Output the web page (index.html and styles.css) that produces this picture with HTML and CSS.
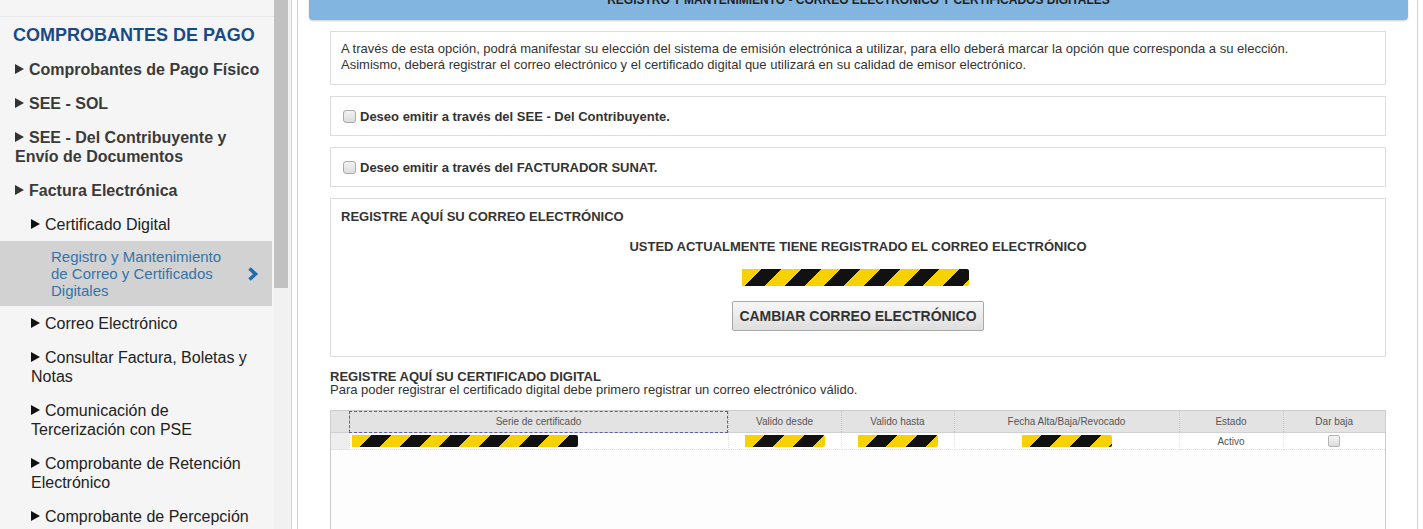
FILE: index.html
```html
<!DOCTYPE html>
<html lang="es">
<head>
  <meta charset="UTF-8" />
  <title>SUNAT - Registro y Mantenimiento de Correo y Certificados Digitales</title>
  <link rel="stylesheet" href="styles.css">
</head>
<body>

  <div class="layout">
    <aside class="sidebar">
      <div class="menu">
        <h3 class="menu-title">COMPROBANTES DE PAGO</h3>
        <div class="item main-item"><span class="arrow"></span>Comprobantes de Pago Físico</div>
        <div class="item main-item"><span class="arrow"></span>SEE - SOL</div>
        <div class="item main-item"><span class="arrow"></span>SEE - Del Contribuyente y Envío de Documentos</div>
        <div class="item main-item"><span class="arrow"></span>Factura Electrónica</div>
        <div class="item sub-item"><span class="arrow"></span>Certificado Digital</div>
        <div class="item active-item">
          <span>Registro y Mantenimiento de Correo y Certificados Digitales</span>
          <svg class="chevron" width="12" height="16" viewBox="0 0 12 16">
            <polyline points="2.5,2.5 8.5,8 2.5,13.5" fill="none" stroke="#1f6db3" stroke-width="3.6" />
          </svg>
        </div>
        <div class="item sub-item"><span class="arrow"></span>Correo Electrónico</div>
        <div class="item sub-item"><span class="arrow"></span>Consultar Factura, Boletas y Notas</div>
        <div class="item sub-item"><span class="arrow"></span>Comunicación de Tercerización con PSE</div>
        <div class="item sub-item"><span class="arrow"></span>Comprobante de Retención Electrónico</div>
        <div class="item sub-item"><span class="arrow"></span>Comprobante de Percepción Electrónico</div>
      </div>
    </aside>

    <div class="scrollbar"><div class="thumb"></div></div>

    <main class="content">
      <div class="page-title">
        <span>REGISTRO Y MANTENIMIENTO - CORREO ELECTRÓNICO Y CERTIFICADOS DIGITALES</span>
      </div>

      <div class="panel intro">
        A través de esta opción, podrá manifestar su elección del sistema de emisión electrónica a utilizar, para ello deberá marcar la opción que corresponda a su elección.<br>
        Asimismo, deberá registrar el correo electrónico y el certificado digital que utilizará en su calidad de emisor electrónico.
      </div>

      <div class="panel option">
        <label><input type="checkbox"> Deseo emitir a través del SEE - Del Contribuyente.</label>
      </div>

      <div class="panel option">
        <label><input type="checkbox"> Deseo emitir a través del FACTURADOR SUNAT.</label>
      </div>

      <div class="panel email">
        <div class="section-title">REGISTRE AQUÍ SU CORREO ELECTRÓNICO</div>
        <div class="email-current">USTED ACTUALMENTE TIENE REGISTRADO EL CORREO ELECTRÓNICO</div>
        <div class="redacted email-value"></div>
        <button class="btn">CAMBIAR CORREO ELECTRÓNICO</button>
      </div>

      <div class="cert-head">
        <div class="section-title">REGISTRE AQUÍ SU CERTIFICADO DIGITAL</div>
        <div>Para poder registrar el certificado digital debe primero registrar un correo electrónico válido.</div>
      </div>

      <div class="grid">
        <table>
          <colgroup>
            <col style="width:18px">
            <col style="width:379px">
            <col style="width:113px">
            <col style="width:113px">
            <col style="width:225px">
            <col style="width:104px">
            <col>
          </colgroup>
          <thead>
            <tr>
              <th class="row-head"></th>
              <th class="focused">Serie de certificado</th>
              <th>Valido desde</th>
              <th>Valido hasta</th>
              <th>Fecha Alta/Baja/Revocado</th>
              <th>Estado</th>
              <th>Dar baja</th>
            </tr>
          </thead>
          <tbody>
            <tr>
              <td class="row-head"></td>
              <td class="left"><div class="redacted serie"></div></td>
              <td><div class="redacted date"></div></td>
              <td><div class="redacted date"></div></td>
              <td><div class="redacted fecha"></div></td>
              <td>Activo</td>
              <td><span class="mini-check"></span></td>
            </tr>
          </tbody>
        </table>
      </div>
    </main>
  </div>

</body>
</html>
```

FILE: styles.css
```css
body {
  margin: 0;
  font-family: "Liberation Sans", Arial, sans-serif;
  font-size: 13px;
  color: #333;
  background: #fff;
  overflow: hidden;
}

.layout {
  display: flex;
  height: 529px;
}

/* menu lateral */
.sidebar {
  width: 274px;
  flex-shrink: 0;
  background-color: #f5f5f5;
  padding-top: 16px;
}

.menu {
  border-top: 1px solid #e9e9e9;
  padding-top: 7px;
}

.menu-title {
  margin: 0 0 6px;
  padding: 0 13px;
  font-size: 18px;
  line-height: 22px;
  color: #174b87;
}

.item {
  padding: 7.5px 13px;
  line-height: 19px;
  font-size: 16px;
}

.main-item {
  font-weight: bold;
  color: #3a3a3a;
  padding-left: 15px;
}

.sub-item {
  color: #222;
  padding-left: 31px;
}

.arrow {
  display: inline-block;
  width: 0;
  height: 0;
  border-left: 9px solid #333;
  border-top: 5px solid transparent;
  border-bottom: 5px solid transparent;
  margin-right: 5px;
  vertical-align: 1px;
}

.sub-item .arrow {
  border-left-color: #111;
}

.active-item {
  display: flex;
  align-items: center;
  justify-content: space-between;
  background-color: #d2d2d2;
  margin-right: 2px;
  padding: 7px 13px 7px 51px;
  font-size: 15px;
  line-height: 17px;
  color: #3474ab;
}

.active-item span {
  width: 180px;
}

.chevron {
  flex-shrink: 0;
}

/* barra de scroll */
.scrollbar {
  width: 17px;
  flex-shrink: 0;
  background-color: #f1f1f1;
  border-right: 1px solid #d6d6d6;
}

.thumb {
  width: 14px;
  height: 288px;
  background-color: #c1c1c1;
}

/* contenido */
.content {
  flex: 1;
  margin: 0 5px 0 5px;
  border-left: 1px solid #d0d0d0;
  border-right: 1px solid #d0d0d0;
  padding: 0 31px 0 32px;
}

.page-title {
  height: 20px;
  overflow: hidden;
  margin: 0 -22px 11px -21px;
  background-color: #82b6e1;
  border-radius: 0 0 4px 4px;
  box-shadow: 0 1px 2px rgba(0, 0, 0, 0.2);
  text-align: center;
  font-size: 12px;
  font-weight: bold;
  color: #222;
}

.page-title span {
  display: block;
  line-height: 14px;
  margin-top: -7px;
}

.panel {
  border: 1px solid #ddd;
  background: #fff;
  margin-bottom: 11px;
}

.intro {
  padding: 9px 10px 11px;
  line-height: 16px;
}

.option {
  padding: 11px 10px 10px;
}

.option label {
  display: flex;
  align-items: center;
  height: 17px;
  font-weight: bold;
}

.option input {
  appearance: none;
  -webkit-appearance: none;
  width: 13px;
  height: 13px;
  margin: 0 4px 0 2px;
  border: 1px solid #ababab;
  border-radius: 3px;
  background: linear-gradient(#f2f2f2, #dcdcdc);
}

.email {
  padding: 10px 10px 25px;
  text-align: center;
}

.section-title {
  font-weight: bold;
  text-align: left;
}

.email .section-title {
  line-height: 16px;
}

.email-current {
  margin-top: 14px;
  line-height: 16px;
  font-weight: bold;
}

.redacted {
  background: repeating-linear-gradient(135deg, #f7d100 0 14px, #111 14px 28px);
  border-radius: 0 2px 2px 0;
}

.email-value {
  width: 227px;
  height: 17px;
  margin: 14px auto 0;
  position: relative;
  left: -3px;
}

.btn {
  margin-top: 15px;
  height: 30px;
  padding: 0 6px;
  font-family: inherit;
  font-size: 14px;
  font-weight: bold;
  color: #333;
  background: linear-gradient(#f7f7f7, #dedede);
  border: 1px solid #a9a9a9;
  border-radius: 2px;
}

.cert-head {
  line-height: 13px;
  margin-top: 13px;
  margin-bottom: 14px;
}

/* tabla de certificados */
.grid {
  border: 1px solid #ccc;
  height: 140px;
  background: #fdfdfd;
}

table {
  width: 100%;
  border-collapse: collapse;
  table-layout: fixed;
  font-size: 10px;
  color: #555;
}

th {
  height: 21px;
  padding: 0;
  font-weight: normal;
  background-color: #e3e3e3;
  border-right: 1px dotted #c4c4c4;
  border-bottom: 1px solid #d0d0d0;
}

th:last-child,
td:last-child {
  border-right: none;
}

th.focused {
  outline: 1px dashed #5c5ca8;
  outline-offset: -1px;
}

td {
  height: 16px;
  padding: 0;
  text-align: center;
  background: #fff;
  border-right: 1px dotted #e4e4d0;
  border-bottom: 1px dotted #ddd;
}

td.row-head {
  background-color: #eee;
}

td.left {
  padding-left: 2px;
}

.serie {
  width: 226px;
  height: 12px;
}

.date {
  width: 80px;
  height: 12px;
  margin: 0 auto;
}

.fecha {
  width: 90px;
  height: 12px;
  margin: 0 auto;
}

.mini-check {
  display: inline-block;
  width: 10px;
  height: 10px;
  border: 1px solid #b5b5b5;
  border-radius: 2px;
  background: linear-gradient(#f4f4f4, #ddd);
  vertical-align: middle;
}
```
